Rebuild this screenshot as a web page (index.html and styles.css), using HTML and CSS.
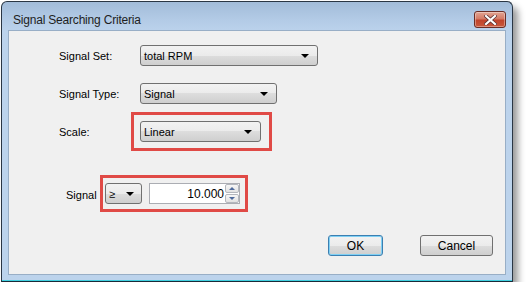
FILE: index.html
```html
<!DOCTYPE html>
<html lang="en">
<head>
  <meta charset="UTF-8" />
  <title>Signal Searching Criteria</title>
  <link rel="stylesheet" href="styles.css">
</head>
<body>
  <div class="window">
    <!-- Title bar -->
    <div class="titlebar">
      <span class="title">Signal Searching Criteria</span>
      <button class="close-btn" aria-label="Close">
        <svg width="13" height="10" viewBox="0 0 13 10">
          <path d="M2 1 L11 9 M11 1 L2 9" stroke="#5a3030" stroke-width="3.6" stroke-linecap="square"/>
          <path d="M2 1 L11 9 M11 1 L2 9" stroke="#ffffff" stroke-width="2.2" stroke-linecap="square"/>
        </svg>
      </button>
    </div>

    <div class="client">
      <div class="row row-set">
        <label class="lbl lbl-wide">Signal Set:</label>
        <div class="combo combo-set"><span>total RPM</span><i class="arrow"></i></div>
      </div>

      <div class="row row-type">
        <label class="lbl lbl-wide">Signal Type:</label>
        <div class="combo combo-type"><span>Signal</span><i class="arrow"></i></div>
      </div>

      <div class="row row-scale">
        <label class="lbl lbl-scale">Scale:</label>
        <div class="highlight hl-scale">
          <div class="combo combo-scale"><span>Linear</span><i class="arrow"></i></div>
        </div>
      </div>

      <div class="row row-signal">
        <label class="lbl lbl-signal">Signal</label>
        <div class="highlight hl-signal">
          <div class="combo combo-op"><span class="op">≥</span><i class="arrow"></i></div>
          <div class="updown">
            <span class="value">10.000</span>
            <div class="spin">
              <div class="spin-btn"><i class="tri-up"></i></div>
              <div class="spin-btn"><i class="tri-down"></i></div>
            </div>
          </div>
        </div>
      </div>

      <div class="buttons">
        <button class="btn btn-default">OK</button>
        <button class="btn">Cancel</button>
      </div>
    </div>
  </div>
</body>
</html>
```

FILE: styles.css
```css
* { margin: 0; padding: 0; box-sizing: border-box; }

body {
  background: #ffffff;
  font-family: 'Liberation Sans', Arial, sans-serif;
  font-size: 11px;
  color: #000;
}

/* Window frame */
.window {
  margin: 1px 0 0 1px;
  width: 512px;
  height: 281px;
  border: 1px solid #2a3644;
  border-bottom-color: #1a2a38;
  border-radius: 6px 6px 0 0;
  background: linear-gradient(#a2bcd9 0, #b3cbe6 18px, #bcd3ec 30px, #bcd3ec 100%);
  box-shadow: 5px 6px 7px rgba(0,0,0,0.4), inset 0 -1px 0 #3fd0e0;
  display: flex;
  flex-direction: column;
}

.titlebar {
  height: 28px;
  display: flex;
  align-items: flex-start;
  justify-content: space-between;
  padding: 0 6px 0 11px;
}

.title {
  font-family: 'Liberation Sans', Arial, sans-serif;
  font-size: 12px;
  letter-spacing: -0.2px;
  color: #1e1e1e;
  margin-top: 11px;
}

.close-btn {
  margin-top: 9px;
  width: 32px;
  height: 17px;
  border: 1px solid #6b2d25;
  border-radius: 3px;
  background: linear-gradient(#e2a593 0, #d47b66 45%, #c0432b 55%, #c9583c 100%);
  display: flex;
  align-items: center;
  justify-content: center;
  box-shadow: inset 0 0 0 1px rgba(255,255,255,0.35);
}

/* Client area */
.client {
  margin: 0 6px 0 6px;
  height: 245px;
  background: #f0f0f0;
  border: 1px solid #98aec6;
  padding: 14px 12px 0 50px;
  display: flex;
  flex-direction: column;
}

.row {
  display: flex;
  align-items: center;
}

.row-type { margin-top: 17px; }
.row-scale { margin-top: 8px; }
.row-signal { margin-top: 24px; padding-left: 7px; }

.lbl { color: #000; }
.lbl-wide { width: 81px; }
.lbl-scale { width: 72px; }
.lbl-signal { width: 34px; padding-top: 3px; }

/* Combo boxes */
.combo {
  height: 21px;
  border: 1px solid #707070;
  border-radius: 3px;
  background: linear-gradient(#f2f2f2 0, #ebebeb 50%, #dddddd 50%, #cfcfcf 100%);
  display: flex;
  align-items: center;
  justify-content: space-between;
  padding: 0 8px 0 3px;
}

.combo-set { width: 178px; }
.combo-type { width: 137px; }
.combo-scale { width: 121px; }
.combo-op { width: 37px; padding-right: 7px; }

.op { font-size: 11px; }

.arrow {
  width: 0;
  height: 0;
  border-left: 4px solid transparent;
  border-right: 4px solid transparent;
  border-top: 4px solid #000;
}

/* Highlight annotations */
.highlight {
  border: 3px solid #e04a46;
  display: flex;
  align-items: center;
}

.hl-scale { padding: 6px 8px 6px 6px; }
.hl-signal { padding: 5px 5px 5px 2px; gap: 7px; }

/* Numeric up-down */
.updown {
  width: 91px;
  height: 21px;
  background: #fff;
  border: 1px solid #abadb3;
  display: flex;
  align-items: center;
  justify-content: flex-end;
}

.value {
  font-size: 12px;
  padding-right: 1px;
}

.spin {
  width: 14px;
  height: 19px;
  display: flex;
  flex-direction: column;
  gap: 1px;
}

.spin-btn {
  flex: 1;
  border: 1px solid #b4b7bd;
  border-radius: 2px;
  background: linear-gradient(#f6f6f6, #e2e2e2);
  display: flex;
  align-items: center;
  justify-content: center;
}

.tri-up, .tri-down {
  width: 0;
  height: 0;
  border-left: 3px solid transparent;
  border-right: 3px solid transparent;
}
.tri-up { border-bottom: 3px solid #4e6a9c; }
.tri-down { border-top: 3px solid #4e6a9c; }

/* Buttons */
.buttons {
  margin-top: auto;
  margin-bottom: 18px;
  display: flex;
  justify-content: flex-end;
  gap: 37px;
}

.btn {
  font-family: 'Liberation Sans', Arial, sans-serif;
  font-size: 12px;
  height: 21px;
  width: 73px;
  border: 1px solid #707070;
  border-radius: 3px;
  background: linear-gradient(#f2f2f2 0, #ebebeb 50%, #dddddd 50%, #cfcfcf 100%);
  color: #000;
}

.btn-default {
  width: 55px;
  border-color: #3c7fb1;
  box-shadow: inset 0 0 0 1px #7fd0f4;
}
```
